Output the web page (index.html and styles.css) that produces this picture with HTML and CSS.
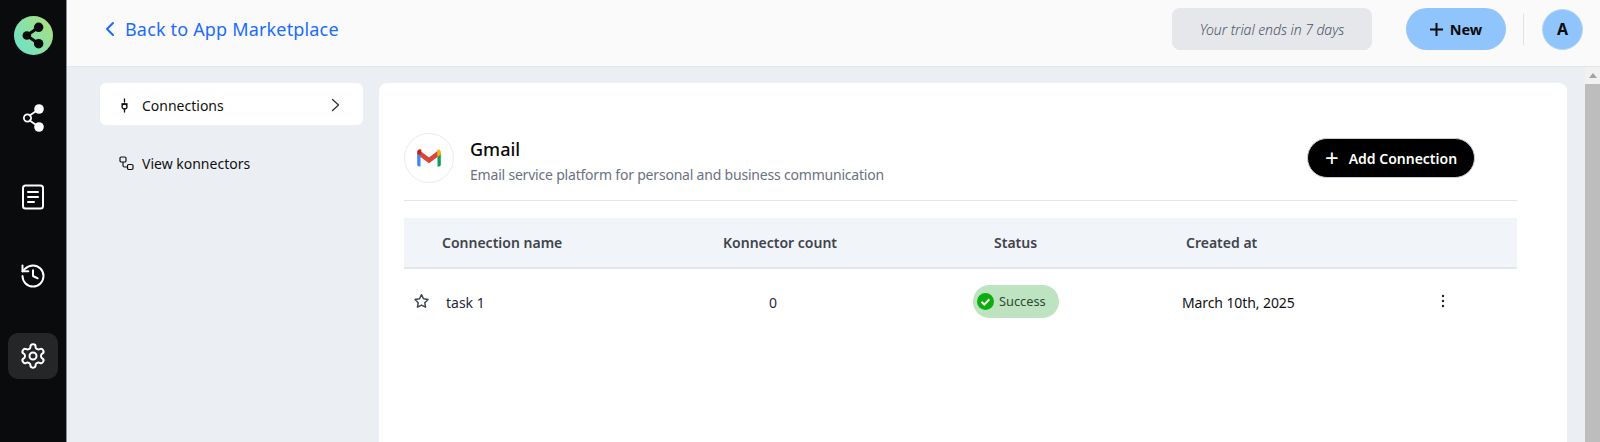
FILE: index.html
```html
<!DOCTYPE html>
<html lang="en">
<head>
<meta charset="utf-8">
<title>Gmail connections</title>
<link rel="stylesheet" href="styles.css">
</head>
<body>
<div class="app">
  <aside class="rail">
    <div class="logo">
      <svg width="39" height="39" viewBox="0 0 38 38">
        <defs><linearGradient id="lg" x1="0" y1="1" x2="1" y2=".2"><stop offset="0" stop-color="#66e4d0"/><stop offset="1" stop-color="#aadf80"/></linearGradient></defs>
        <circle cx="19" cy="19" r="19" fill="url(#lg)"/>
        <path d="M24 11 12.500 19 24 27" fill="none" stroke="#0a0b0d" stroke-width="3"/>
        <circle cx="24" cy="11" r="4.600" fill="#0a0b0d"/><circle cx="24" cy="27" r="4.600" fill="#0a0b0d"/><circle cx="12.500" cy="19" r="4.200" fill="#0a0b0d"/>
      </svg>
    </div>
    <nav class="rail-nav">
      <div class="rail-item">
        <svg width="24" height="30" viewBox="0 0 24 30" fill="none">
          <path d="M18 6 8 13M18 24 8 17" stroke="#fff" stroke-width="1.800"/>
          <circle cx="6.500" cy="15" r="3.600" stroke="#fff" stroke-width="1.800"/>
          <circle cx="18" cy="6" r="4.800" fill="#fff"/><circle cx="18" cy="24" r="4.800" fill="#fff"/>
        </svg>
      </div>
      <div class="rail-item">
        <svg width="24" height="26" viewBox="0 0 24 26" fill="none" stroke="#fff" stroke-linecap="round">
          <rect x="2" y="1.500" width="20" height="23" rx="2.500" stroke-width="2"/>
          <path d="M7 8h10M7 13h10M7 18h6" stroke-width="2"/>
        </svg>
      </div>
      <div class="rail-item">
        <svg width="28" height="28" viewBox="0 0 24 24" fill="none" stroke="#fff" stroke-width="1.700" stroke-linecap="round" stroke-linejoin="round">
          <path d="M3 12a9 9 0 1 0 9-9 9.750 9.750 0 0 0-6.740 2.740L3 8"/><path d="M3 3v5h5"/><path d="M12 7v5l4 2"/>
        </svg>
      </div>
      <div class="rail-item rail-item-active">
        <svg width="28" height="28" viewBox="0 0 24 24" fill="none" stroke="#fff" stroke-width="1.700" stroke-linecap="round" stroke-linejoin="round">
          <path d="M12.220 2h-.44a2 2 0 0 0-2 2v.18a2 2 0 0 1-1 1.730l-.43.25a2 2 0 0 1-2 0l-.15-.08a2 2 0 0 0-2.730.73l-.22.38a2 2 0 0 0 .73 2.730l.15.1a2 2 0 0 1 1 1.720v.51a2 2 0 0 1-1 1.740l-.15.09a2 2 0 0 0-.73 2.730l.22.38a2 2 0 0 0 2.730.73l.15-.08a2 2 0 0 1 2 0l.43.25a2 2 0 0 1 1 1.730V20a2 2 0 0 0 2 2h.44a2 2 0 0 0 2-2v-.18a2 2 0 0 1 1-1.730l.43-.25a2 2 0 0 1 2 0l.15.08a2 2 0 0 0 2.730-.73l.22-.39a2 2 0 0 0-.73-2.730l-.15-.08a2 2 0 0 1-1-1.740v-.5a2 2 0 0 1 1-1.740l.15-.09a2 2 0 0 0 .73-2.730l-.22-.38a2 2 0 0 0-2.730-.73l-.15.08a2 2 0 0 1-2 0l-.43-.25a2 2 0 0 1-1-1.730V4a2 2 0 0 0-2-2z"/><circle cx="12" cy="12" r="3"/>
        </svg>
      </div>
    </nav>
  </aside>
  <div class="shell">
    <header class="topbar">
      <a class="back">
        <svg width="10" height="16" viewBox="0 0 10 16" fill="none" stroke="#1a6cff" stroke-width="2" stroke-linecap="round" stroke-linejoin="round"><path d="M8 2 2 8l6 6"/></svg>
        <span>Back to App Marketplace</span>
      </a>
      <div class="top-right">
        <div class="trial">Your trial ends in 7 days</div>
        <button class="new-btn">
          <svg width="13" height="13" viewBox="0 0 13 13" stroke="#0b0b0b" stroke-width="2"><path d="M6.500 0v13M0 6.500h13"/></svg>
          New
        </button>
        <div class="vr"></div>
        <div class="avatar">A</div>
      </div>
    </header>
    <div class="body">
      <div class="sidenav">
        <div class="snav-item snav-active">
          <svg width="9" height="15" viewBox="0 0 9 15" fill="none" stroke="#111" stroke-width="1.300" stroke-linecap="round"><path d="M4.500 1v3"/><path d="M1.800 6h5.400"/><circle cx="4.500" cy="8.500" r="2.500"/><path d="M4.500 11v3"/></svg>
          <span class="snav-label">Connections</span>
          <svg class="snav-caret" width="9" height="14" viewBox="0 0 9 14" fill="none" stroke="#333" stroke-width="1.300" stroke-linecap="round" stroke-linejoin="round"><path d="M1.500 1.500 7.500 7l-6 5.500"/></svg>
        </div>
        <div class="snav-item">
          <svg width="15" height="15" viewBox="0 0 15 15" fill="none" stroke="#111" stroke-width="1.200"><rect x="1" y="1" width="6" height="5" rx="1.200"/><rect x="8.500" y="8.500" width="5.500" height="5" rx="1.200"/><path d="M4 6v3.500a1.500 1.500 0 0 0 1.500 1.500h3"/></svg>
          <span class="snav-label">View konnectors</span>
        </div>
      </div>
      <main class="card">
        <section class="app-head">
          <div class="app-icon">
            <svg width="24" height="19" viewBox="0 0 24 19" fill="none">
              <path d="M20.500 17.500h1.600a1.700 1.700 0 0 0 1.700-1.700V3.500L20.500 6z" fill="#0f9d58"/>
              <path d="M20.500 1.800V8l3.300-2.500V3c0-2.200-2.400-3.200-4-2z" fill="#f4b400"/>
              <path d="M3.500 8V2l8.500 6.400L20.500 2v6L12 14.200z" fill="#db4437"/>
              <path d="M.2 3c0-2.200 2.600-3.400 4.200-2.200L3.500 8 .2 5.500z" fill="#c5221f"/>
              <path d="M3.500 6v11.500H1.900A1.700 1.700 0 0 1 .2 15.800V5z" fill="#4285f4"/>
            </svg>
          </div>
          <div class="app-text">
            <h1>Gmail</h1>
            <p>Email service platform for personal and business communication</p>
          </div>
          <button class="add-btn"><span class="add-plus">+</span>Add Connection</button>
        </section>
        <section class="table">
          <div class="thead">
            <div class="col-name th-name">Connection name</div>
            <div class="col-count th-count">Konnector count</div>
            <div class="col-status th-status">Status</div>
            <div class="col-date th-date">Created at</div>
          </div>
          <div class="trow">
            <div class="col-name name-cell">
              <svg width="17" height="16" viewBox="0 0 24 24" fill="none" stroke="#3f4650" stroke-width="2.200" stroke-linejoin="round"><path d="m12 2.500 3 6.200 6.800 1-4.900 4.800 1.200 6.800-6.100-3.200-6.100 3.200 1.200-6.800-4.900-4.800 6.800-1z"/></svg>
              <span>task 1</span>
            </div>
            <div class="col-count td-count">0</div>
            <div class="col-status td-status">
              <span class="badge">
                <svg width="17" height="17" viewBox="0 0 17 17"><circle cx="8.500" cy="8.500" r="8.500" fill="#0ead0e"/><path d="m4.500 8.800 2.800 2.800 5-5.400" fill="none" stroke="#fff" stroke-width="2"/></svg>
                Success
              </span>
            </div>
            <div class="col-date td-date">March 10th, 2025</div>
            <div class="col-menu">
              <svg width="4" height="14" viewBox="0 0 4 14" fill="#222"><circle cx="2" cy="2" r="1.200"/><circle cx="2" cy="7" r="1.200"/><circle cx="2" cy="12" r="1.200"/></svg>
            </div>
          </div>
        </section>
      </main>
      <div class="scrollbar">
        <div class="sb-arrow"></div>
        <div class="sb-thumb"></div>
      </div>
    </div>
  </div>
</div>
</body>
</html>
```

FILE: styles.css
```css
* { box-sizing: border-box; }
html, body { margin: 0; height: 100%; overflow: hidden; }
body { font-family: "Noto Sans", "Open Sans", sans-serif; color: #111; background: #ebeef3; }
h1, p { margin: 0; }
button { font-family: inherit; cursor: pointer; }

.app { display: flex; height: 442px; }

/* rail */
.rail { width: 67px; flex: none; background: #0a0b0d; border-right: 1px solid #8b8e92; display: flex; flex-direction: column; align-items: center; padding-top: 16px; }
.logo { height: 39px; margin: 0 0 40px 1px; }
.logo svg, .rail-item svg { display: block; }
.rail-nav { display: flex; flex-direction: column; gap: 33px; }
.rail-item { width: 50px; height: 46px; display: flex; align-items: center; justify-content: center; border-radius: 10px; }
.rail-item-active { background: #252628; margin-top: 1px; }

/* topbar */
.shell { flex: 1; min-width: 0; display: flex; flex-direction: column; }
.topbar { height: 67px; flex: none; background: #fafafa; border-bottom: 1px solid #e2e5ea; display: flex; align-items: flex-start; justify-content: space-between; }
.back { display: flex; align-items: center; gap: 10px; margin: 15px 0 0 38px; color: #1a6cff; font-size: 18px; line-height: 28px; letter-spacing: .17px; }
.top-right { display: flex; align-items: center; margin: 8px 17px 0 0; }
.trial { width: 200px; height: 42px; display: flex; align-items: center; justify-content: center; background: #e5e7eb; border-radius: 8px; font-size: 14px; font-style: italic; font-weight: 300; color: #4b5563; letter-spacing: -.05px; }
.new-btn { width: 100px; height: 42px; margin-left: 34px; border: 0; border-radius: 21px; background: #90c4fd; color: #0b0b0b; font-size: 14.500px; font-weight: 700; display: flex; align-items: center; justify-content: center; gap: 7px; }
.vr { width: 1px; height: 31px; margin: 0 18px 0 17px; background: #dfe1e5; }
.avatar { width: 41px; height: 41px; border-radius: 50%; background: #90c4fd; border: 1px solid #b6d6f8; display: flex; align-items: center; justify-content: center; font-size: 16px; font-weight: 700; color: #0b0b0b; }

/* body */
.body { flex: 1; min-height: 0; display: flex; padding: 16px 0 0 33px; }
.sidenav { width: 263px; flex: none; display: flex; flex-direction: column; gap: 17px; }
.snav-item { height: 42px; display: flex; align-items: center; padding: 0 23px 0 19px; font-size: 14px; color: #111; border-radius: 6px; }
.snav-item svg { flex: none; }
.snav-active { background: #fff; padding-top: 2px; padding-left: 20px; }
.snav-label { margin-left: 8px; }
.snav-active .snav-label { margin-left: 13px; }
.snav-caret { margin-left: auto; }

.card { width: 1188px; flex: none; margin-left: 16px; background: #fff; border-radius: 8px 8px 0 0; padding: 50px 50px 0 25px; }

.app-head { height: 68px; border-bottom: 1px solid #e2e5e9; display: flex; align-items: flex-start; }
.app-icon { width: 50px; height: 50px; flex: none; border-radius: 50%; border: 1px solid #ececec; display: flex; align-items: center; justify-content: center; }
.app-text { margin-left: 16px; padding-top: 3px; }
.app-text h1 { font-size: 18px; font-weight: 500; line-height: 26px; color: #0a0a0a; }
.app-text p { font-size: 14px; line-height: 26px; color: #6b7280; letter-spacing: -.2px; }
.add-btn { margin: 5px 42px 0 auto; width: 168px; height: 40px; border: 1px solid #c8ccd4; border-radius: 20px; background: #000; color: #fff; font-size: 14px; font-weight: 600; display: flex; align-items: center; justify-content: center; gap: 10px; }
.add-plus { font-size: 24px; font-weight: 400; line-height: 24px; }

/* table */
.table { margin-top: 17px; }
.thead { height: 51px; background: #f1f4f9; border-bottom: 2px solid #e3e6eb; display: flex; align-items: center; font-size: 14px; font-weight: 600; color: #40444c; }
.trow { height: 64px; display: flex; align-items: center; font-size: 14px; color: #1f2937; }
.col-name { width: 296px; flex: none; }
.col-count { width: 260px; flex: none; }
.col-status { width: 210px; flex: none; }
.col-date { width: 250px; flex: none; }
.th-name { padding-left: 38px; }
.th-count { padding-left: 23px; }
.th-status { padding-left: 34px; }
.th-date { padding-left: 16px; }
.name-cell { display: flex; align-items: center; gap: 16px; padding-left: 9px; }
.name-cell svg { flex: none; }
.name-cell span { padding-top: 2px; }
.td-count { padding: 2px 0 0 69px; }
.td-status { padding-left: 13px; }
.td-date { padding: 2px 0 0 12px; color: #111; letter-spacing: -.1px; }
.col-menu { padding-left: 21px; display: flex; align-items: center; }
.badge { width: 86px; height: 33px; display: inline-flex; align-items: center; gap: 5px; padding-left: 4px; background: #bde3c0; border-radius: 17px; font-size: 12.800px; color: #2f4a33; }

/* scrollbar */
.scrollbar { width: 15px; flex: none; margin-left: 18px; margin-top: -16px; background: #f1f1f1; display: flex; flex-direction: column; align-items: center; }
.sb-arrow { margin-top: 6px; height: 5px; width: 0; border-left: 4px solid transparent; border-right: 4px solid transparent; border-bottom: 5px solid #a3a3a3; }
.sb-thumb { width: 15px; flex: 1; margin-top: 6px; background: #bdbdbd; }
```
